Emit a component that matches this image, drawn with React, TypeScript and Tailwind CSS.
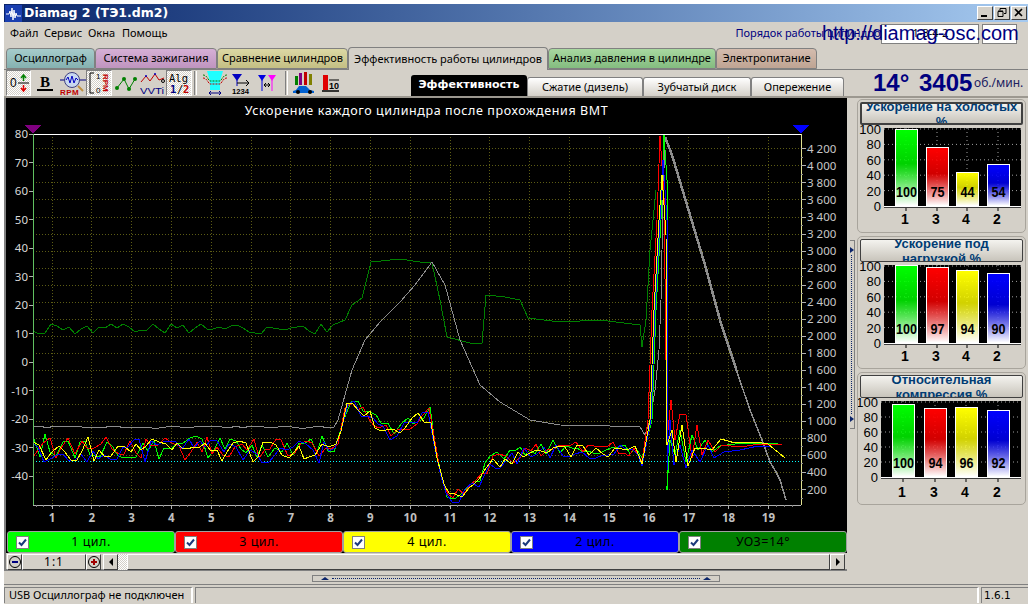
import React from "react";

const FONT = "font-['Noto_Sans',sans-serif]";
const NAVY = "#00007f";

// --- chart data, in page pixels ---
let seed = 12345;
const rnd = () => {
  seed = (seed * 16807) % 2147483647;
  return seed / 2147483647;
};

const lerp = (pts: number[][], x: number) => {
  for (let i = 1; i < pts.length; i++) {
    if (x <= pts[i][0]) {
      const [x0, y0] = pts[i - 1];
      const [x1, y1] = pts[i];
      return y0 + ((y1 - y0) * (x - x0)) / (x1 - x0);
    }
  }
  return pts[pts.length - 1][1];
};

const envelope = [
  [33, 448], [335, 450], [340, 430], [350, 398], [367, 413], [383, 430], [393, 433], [413, 421],
  [430, 412], [437, 453], [447, 497], [465, 492], [480, 478], [490, 462], [510, 458], [540, 449], [640, 450],
];
const ampAt = (x: number) => (x < 335 ? 24 : x < 440 ? 13 : 15);

const cylinder = (dx: number, bias: number, top: number, low: number, tail: number[][]) => {
  const pts: number[][] = [];
  for (let x = 33; x < 640; x += 5 + Math.floor(rnd() * 3)) {
    pts.push([x, lerp(envelope, x) + bias + (rnd() - 0.5) * ampAt(x)]);
  }
  pts.push([642, 462 + bias * 2], [648 + dx, 420], [652 + dx, 310], [657 + dx, 220], [660 + dx, top], [664 + dx, top + 60], [667, low]);
  return [...pts, ...tail];
};

const toPoints = (pts: number[][]) => pts.map((p) => `${p[0]},${Math.round(p[1])}`).join(" ");

const greenCyl = cylinder(4, -2, 135, 490, [[670, 440], [675, 455], [680, 430], [686, 462], [692, 435], [698, 450], [705, 440], [712, 452], [720, 446], [735, 444], [755, 443], [778, 444]]);
const redCyl = cylinder(0, 0, 136, 440, [[671, 400], [675, 440], [680, 414], [686, 415], [692, 458], [697, 425], [702, 455], [708, 440], [715, 452], [722, 445], [740, 447], [760, 444], [782, 445]]);
const blueCyl = cylinder(3, 2, 160, 470, [[670, 420], [674, 465], [680, 445], [686, 468], [692, 450], [700, 462], [708, 445], [714, 458], [724, 452], [740, 450], [758, 446], [772, 446]]);
const yellowCyl = cylinder(2, 1, 175, 445, [[672, 430], [676, 462], [682, 425], [688, 466], [695, 448], [702, 448], [712, 450], [721, 439], [735, 443], [755, 442], [768, 444], [785, 458]]);

const advance: number[][] = [];
for (let x = 33; x < 338; x += 6) advance.push([x, 329 + (rnd() - 0.5) * 11]);
advance.push(
  [345, 320], [352, 305], [362, 298], [371, 262], [400, 259], [420, 262], [432, 263], [440, 300], [447, 337], [470, 343],
  [482, 343], [486, 295], [505, 297], [520, 300], [528, 318], [560, 322], [600, 320], [640, 325], [642, 347], [646, 320], [650, 250], [656, 190],
);

const rpmFlat: number[][] = [];
for (let x = 33; x < 336; x += 7) rpmFlat.push([x, 427 + (rnd() - 0.5) * 3]);
const rpmCurve = [
  ...rpmFlat,
  [338, 420], [345, 395], [352, 370], [365, 340], [380, 322], [400, 302], [415, 285], [432, 262], [445, 285], [460, 340], [480, 385],
  [500, 402], [530, 420], [560, 425], [610, 426], [640, 427], [645, 435], [650, 420], [655, 390], [659, 350], [661, 300], [663, 200], [665, 137],
];
const rpmFall = [[665, 137], [672, 155], [690, 215], [705, 265], [720, 320], [737, 372]];
const rpmTail = [[737, 372], [750, 410], [762, 440], [770, 462], [776, 472], [780, 480], [786, 500]];

const rightTicks = Array.from({ length: 21 }, (_, i) => 200 + i * 200);
const rightY = (v: number) => 489.5 - ((v - 200) / 200) * 17.03;
const leftTicks = [80, 70, 60, 50, 40, 30, 20, 10, 0, -10, -20, -30, -40];
const leftY = (v: number) => 134 + ((80 - v) / 10) * 28.5;
const xTicks = Array.from({ length: 19 }, (_, i) => i + 1);
const tickX = (n: number) => 52 + (n - 1) * 39.8;
const minorX = Array.from({ length: 96 }, (_, i) => 36 + i * 7.96);

function MainChart() {
  return (
    <svg viewBox="6 125 841 403" className="block w-[841px] h-[403px]" fontFamily="'Noto Sans', sans-serif" shapeRendering="crispEdges">
      {rightTicks.map((v) => (
        <line key={v} x1="33" x2="801" y1={rightY(v)} y2={rightY(v)} stroke="#5c5c14" strokeDasharray="1 2" />
      ))}
      {xTicks.map((n) => (
        <line key={n} x1={tickX(n)} x2={tickX(n)} y1="134" y2="505" stroke="#5c5c14" strokeDasharray="1 2" />
      ))}
      <line x1="33" x2="801" y1="461" y2="461" stroke="#00ffff" strokeDasharray="1 2" />

      <polyline points={toPoints(advance)} fill="none" stroke="#008000" />
      <polyline points={toPoints(rpmCurve)} fill="none" stroke="#8c8c8c" />
      <polyline points={toPoints(rpmFall)} fill="none" stroke="#8c8c8c" strokeWidth="2.5" />
      <polyline points={toPoints(rpmTail)} fill="none" stroke="#8c8c8c" strokeWidth="1.5" />
      <polyline points={toPoints(greenCyl)} fill="none" stroke="#00ff00" />
      <polyline points={toPoints(redCyl)} fill="none" stroke="#ff0000" />
      <polyline points={toPoints(blueCyl)} fill="none" stroke="#0000ff" />
      <polyline points={toPoints(yellowCyl)} fill="none" stroke="#ffff00" />

      <line x1="33" x2="801" y1="134" y2="134" stroke="#ffffff" />
      <line x1="33" x2="33" y1="134" y2="505" stroke="#60c060" />
      <line x1="801" x2="801" y1="134" y2="505" stroke="#e0e090" />
      <line x1="33" x2="801" y1="505" y2="505" stroke="#b0b0b0" />

      <polygon points="25,125 41,125 33,134" fill="#800080" />
      <polygon points="793,125 809,125 801,134" fill="#0000ff" />

      {leftTicks.map((v) => (
        <g key={v}>
          <line x1="29" x2="33" y1={leftY(v)} y2={leftY(v)} stroke="#b0b0b0" />
          <text x="28" y={leftY(v) + 4} textAnchor="end" fontSize="11.5" fill="#d8d8d8" shapeRendering="auto">
            {v}
          </text>
        </g>
      ))}
      {rightTicks.map((v) => (
        <g key={v}>
          <line x1="801" x2="806" y1={rightY(v)} y2={rightY(v)} stroke="#b0b0b0" />
          <line x1="801" x2="803" y1={rightY(v) + 8.5} y2={rightY(v) + 8.5} stroke="#909090" />
          <text x="807" y={rightY(v) + 4} fontSize="11.5" fill="#c8c8c8">
            {v >= 1000 ? `${Math.floor(v / 1000)} ${String(v % 1000).padStart(3, "0")}` : v}
          </text>
        </g>
      ))}
      {minorX.map((x) => (
        <line key={x} x1={x} x2={x} y1="505" y2="507" stroke="#808080" />
      ))}
      {xTicks.map((n) => (
        <g key={n}>
          <line x1={tickX(n)} x2={tickX(n)} y1="505" y2="509" stroke="#b0b0b0" />
          <text x={tickX(n)} y="522" textAnchor="middle" fontSize="11.5" fontWeight="700" fill="#c0c0c0">
            {n}
          </text>
        </g>
      ))}
    </svg>
  );
}

// --- right hand bar charts ---
type Bar = { label: string; value: number; color: string; x: number; top: number };

function BarChart({ id, left, top, bottom, labelY, bars }: { id: string; left: number; top: number; bottom: number; labelY: number; bars: Bar[] }) {
  const ticks = [100, 80, 60, 40, 20, 0];
  const tickY = (v: number) => bottom - ((bottom - top - 1) * v) / 100;
  return (
    <svg viewBox={`858 ${top - 3} 167 ${labelY - top + 11}`} className="block" style={{ width: 167, height: labelY - top + 11 }} fontFamily="'Liberation Sans', sans-serif">
      <defs>
        {bars.map((b) => (
          <linearGradient key={b.label} id={`${id}${b.label}`} x1="0" y1="0" x2="0" y2="1">
            <stop offset="0" stopColor={b.color} />
            <stop offset="0.45" stopColor={b.color} stopOpacity="0.82" />
            <stop offset="1" stopColor="#ffffff" />
          </linearGradient>
        ))}
      </defs>
      <rect x={left} y={top} width={1021 - left} height={bottom - top} fill="#000000" />
      {ticks.slice(0, 5).map((v) => (
        <line key={v} x1={left} x2="1021" y1={tickY(v)} y2={tickY(v)} stroke="#a0a0a0" strokeDasharray="1 3" />
      ))}
      {bars.map((b) => (
        <line key={b.label} x1={b.x + 11} x2={b.x + 11} y1={top} y2={bottom} stroke="#a0a0a0" strokeDasharray="1 3" />
      ))}
      {ticks.map((v) => (
        <text key={v} x={left - 3} y={tickY(v) + 5} textAnchor="end" fontSize="13" fill="#000000">
          {v}
        </text>
      ))}
      {bars.map((b) => (
        <g key={b.label}>
          <rect x={b.x + 0.5} y={b.top + 0.5} width="22" height={bottom - b.top - 1} fill={`url(#${id}${b.label})`} stroke="#ffffff" />
          <text x={b.x + 11.5} y={bottom - 9} textAnchor="middle" fontSize="15" fontWeight="700" fill="#000000" textLength={b.value === 100 ? 21 : 14} lengthAdjust="spacingAndGlyphs">
            {b.value}
          </text>
          <line x1={b.x + 11} x2={b.x + 11} y1={bottom} y2={bottom + 5} stroke="#000000" />
          <text x={b.x + 10} y={labelY + 5} textAnchor="middle" fontSize="14" fontWeight="700" fill="#000000">
            {b.label}
          </text>
        </g>
      ))}
      <line x1={left} x2="1021" y1={bottom + 0.5} y2={bottom + 0.5} stroke="#ffffff" />
      <line x1={left} x2="1021" y1={bottom + 1.5} y2={bottom + 1.5} stroke="#404040" />
    </svg>
  );
}

function MetricPanel({ title, active, h, children }: { title: string; active?: boolean; h: string; children: React.ReactNode }) {
  return (
    <div className={`${h} border border-[#a8a49c] rounded-[5px] flex flex-col items-center pt-[2px] overflow-hidden`}>
      <div
        className={`w-[163px] h-[23px] shrink-0 rounded-[2px] border border-[#404040] flex items-center justify-center text-center leading-[15px] font-['Liberation_Sans',sans-serif] font-bold text-[13px] text-[#003c74] bg-gradient-to-b from-[#f4f3ef] to-[#c8c4bb] overflow-hidden ${active ? "border-2 border-[#003c74]" : ""}`}
      >
        <span>{title}</span>
      </div>
      {children}
    </div>
  );
}

// --- toolbar icons ---
const Dither = "bg-[repeating-conic-gradient(#ffffff_0_25%,#d4d0c8_0_50%)] bg-[length:2px_2px]";

function ToolBtn({ w, pressed, children }: { w: string; pressed?: boolean; children: React.ReactNode }) {
  return (
    <div className={`${w} h-[26px] shrink-0 flex items-center justify-center ${pressed ? `${Dither} border-t border-l border-[#808080] border-r border-r-white border-b border-b-white` : ""}`}>
      {children}
    </div>
  );
}

const iconFont = "'Liberation Sans', sans-serif";

const toolIcons = {
  zero: (
    <svg width="22" height="22" viewBox="0 0 22 22" fontFamily={iconFont}>
      <text x="2" y="15" fontSize="12" fill="#000">0</text>
      <line x1="10" x2="21" y1="11" y2="11" stroke="#000" />
      <path d="M15.5 9V4M13 6l2.5-3L18 6" fill="none" stroke="#008000" strokeWidth="1.5" />
      <path d="M15.5 13v5M13 16l2.5 3 2.5-3" fill="none" stroke="#e00000" strokeWidth="1.5" />
    </svg>
  ),
  bold: (
    <svg width="20" height="20" viewBox="0 0 20 20" fontFamily="'Liberation Serif', serif">
      <text x="10" y="14" textAnchor="middle" fontSize="15" fontWeight="700" fill="#000">B</text>
      <rect x="2" y="16" width="16" height="2" fill="#000" />
    </svg>
  ),
  rpm: (
    <svg width="26" height="26" viewBox="0 0 26 26" fontFamily={iconFont}>
      <line x1="0" x2="26" y1="10" y2="10" stroke="#000080" />
      <circle cx="12" cy="10" r="7.5" fill="#c8d8f0" stroke="#404080" />
      <path d="M6 10l2-3 2 6 2-7 2 7 2-5 2 2" fill="none" stroke="#0000c0" />
      <path d="M18 16l5 5" stroke="#c09040" strokeWidth="2" />
      <text x="0" y="25" fontSize="8" fontWeight="700" fill="#c00000" letterSpacing="0.5">RPM</text>
    </svg>
  ),
  rpmAxis: (
    <svg width="24" height="24" viewBox="0 0 24 24" fontFamily={iconFont}>
      <path d="M7 2H3v20h4" fill="none" stroke="#000" />
      <text x="9" y="8" fontSize="8" fill="#000">1</text>
      <text x="9" y="22" fontSize="8" fill="#000">0</text>
      <text transform="translate(16 3) rotate(90)" fontSize="8" fontWeight="700" fill="#c00000">RPM</text>
    </svg>
  ),
  dots: (
    <svg width="24" height="22" viewBox="0 0 24 22">
      <path d="M3 16L10 7l5 10 6-10" fill="none" stroke="#008000" />
      <g fill="#008000">
        <circle cx="3" cy="16" r="2" /><circle cx="10" cy="7" r="2" /><circle cx="15" cy="17" r="2" /><circle cx="21" cy="7" r="2" />
      </g>
    </svg>
  ),
  vvti: (
    <svg width="26" height="24" viewBox="0 0 26 24" fontFamily={iconFont}>
      <path d="M1 11l5-6 4 5 5-7 4 6 5-2" fill="none" stroke="#c00000" />
      <g fill="#0000c0"><circle cx="6" cy="5" r="1" /><circle cx="15" cy="3" r="1" /></g>
      <circle cx="23" cy="10" r="1.5" fill="none" stroke="#000" />
      <text x="0" y="23" fontSize="9.5" fill="#000080" textLength="24" lengthAdjust="spacingAndGlyphs">VVTi</text>
    </svg>
  ),
  alg: (
    <svg width="22" height="24" viewBox="0 0 22 24" fontFamily="'DejaVu Sans Mono', monospace">
      <text x="1" y="11" fontSize="10.5" fill="#000">Alg</text>
      <text x="2" y="22" fontSize="10.5" fontWeight="700" fill="#000080">1</text>
      <text x="9" y="22" fontSize="10.5" fill="#000">/</text>
      <text x="15" y="22" fontSize="10.5" fontWeight="700" fill="#c00000">2</text>
    </svg>
  ),
  wave: (
    <svg width="24" height="26" viewBox="0 0 24 26">
      <path d="M4 1h16l-3 10v9H7v-9z" fill="#20ffff" />
      <path d="M0 8c4 0 5 5 7 6h10c2-1 3-6 7-6" fill="none" stroke="#c00000" strokeDasharray="2 1" />
      <path d="M0 5c4 0 5 5 7 6h10c2-1 3-6 7-6" fill="none" stroke="#008000" strokeDasharray="2 1" />
      <path d="M6 23h12M6 23l2-2M6 23l2 2M18 23l-2-2M18 23l-2 2" stroke="#000080" fill="none" />
    </svg>
  ),
  order: (
    <svg width="20" height="22" viewBox="0 0 20 22" fontFamily={iconFont}>
      <polygon points="1,2 11,2 6,9" fill="#0000c0" />
      <line x1="6" x2="6" y1="8" y2="14" stroke="#0000c0" />
      <path d="M6 11h12M15 8l3 3-3 3" fill="none" stroke="#000" />
      <text x="1" y="22" fontSize="7.5" fontWeight="700" fill="#000" textLength="17" lengthAdjust="spacingAndGlyphs">1234</text>
    </svg>
  ),
  span: (
    <svg width="18" height="20" viewBox="0 0 18 20">
      <polygon points="0,2 8,2 4,8" fill="#0000e0" />
      <line x1="4" x2="4" y1="7" y2="18" stroke="#0000e0" />
      <polygon points="10,2 18,2 14,8" fill="#ff00ff" />
      <line x1="14" x2="14" y1="7" y2="18" stroke="#ff00ff" />
      <path d="M6 12h6M6 12l2-2M6 12l2 2M12 12l-2-2M12 12l-2 2" stroke="#000" fill="none" />
    </svg>
  ),
  car: (
    <svg width="24" height="24" viewBox="0 0 24 24">
      <rect x="3" y="5" width="3" height="9" fill="#008000" />
      <rect x="7" y="2" width="3" height="12" fill="#800080" />
      <rect x="12" y="1" width="3" height="13" fill="#c00000" />
      <rect x="17" y="3" width="3" height="11" fill="#808000" />
      <path d="M1 20l3-1 3-4h7l4 4 4 1v2H1z" fill="#0060d0" />
      <circle cx="6" cy="21" r="2" fill="#000" /><circle cx="18" cy="21" r="2" fill="#000" />
    </svg>
  ),
  bar10: (
    <svg width="17" height="22" viewBox="0 0 17 22" fontFamily={iconFont}>
      <rect x="1" y="3" width="5" height="15" fill="#e00000" />
      <line x1="0" x2="17" y1="19" y2="19" stroke="#000" strokeWidth="1.5" />
      <text x="7" y="17" fontSize="9" fontWeight="700" fill="#000">10</text>
      <line x1="7" x2="17" y1="8" y2="8" stroke="#000" />
    </svg>
  ),
};

const topTabs = [
  { label: "Осциллограф", w: "w-[89px]", cls: "bg-gradient-to-b from-[#a6cccc] to-[#85b1b0]" },
  { label: "Система зажигания", w: "w-[122px]", cls: "bg-gradient-to-b from-[#d6b0d6] to-[#bf94bf]" },
  { label: "Сравнение цилиндров", w: "w-[131px]", cls: "bg-gradient-to-b from-[#dcd8a4] to-[#c4bf84]" },
  { label: "Эффективность работы цилиндров", w: "w-[200px]", active: true, cls: "bg-[#d4d0c8]" },
  { label: "Анализ давления в цилиндре", w: "w-[168px]", cls: "bg-gradient-to-b from-[#a8d8a0] to-[#84bc80]" },
  { label: "Электропитание", w: "w-[101px]", cls: "bg-gradient-to-b from-[#d4bcae] to-[#bfa493]" },
];

const subTabs = [
  { label: "Эффективность", w: "w-[116px]", active: true },
  { label: "Сжатие (дизель)", w: "w-[116px]" },
  { label: "Зубчатый диск", w: "w-[108px]" },
  { label: "Опережение", w: "w-[93px]" },
];

const legend = [
  { label: "1 цил.", cls: "bg-[#00ff00]" },
  { label: "3 цил.", cls: "bg-[#ff0000]" },
  { label: "4 цил.", cls: "bg-[#ffff00]" },
  { label: "2 цил.", cls: "bg-[#0000ff]" },
  { label: "УОЗ=14°", cls: "bg-[#008000]" },
];

const winBtn = "w-[16px] h-[14px] bg-[#d4d0c8] border border-t-white border-l-white border-r-[#404040] border-b-[#404040] flex items-center justify-center";
const raised = "bg-[#d4d0c8] border border-t-white border-l-white border-r-[#404040] border-b-[#404040]";

export default function App() {
  return (
    <div className={`w-[1032px] h-[608px] bg-white pt-[4px] pl-[4px] overflow-hidden ${FONT}`}>
      <div className="w-[1024px] h-[600px] bg-[#d4d0c8] flex flex-col text-[11px] text-black relative">
        {/* title bar */}
        <div className="h-[18px] shrink-0 flex items-center bg-gradient-to-r from-[#0a246a] to-[#a6caf0] pl-[1px] pr-[1px]">
          <svg width="17" height="17" viewBox="0 0 17 17" className="shrink-0">
            <rect width="17" height="17" fill="#1a3fb0" />
            <path d="M1 9h3l1-3 1 6 1-9 1 12 1-10 1 8 1-5 1 3h4" fill="none" stroke="#ffffff" />
          </svg>
          <span className="ml-[2px] font-['DejaVu_Sans',sans-serif] font-bold text-[12.5px] text-white leading-none">Diamag 2 (ТЭ1.dm2)</span>
          <div className="ml-auto flex items-center">
            <div className={winBtn}>
              <svg width="10" height="10" viewBox="0 0 10 10"><rect x="1" y="7" width="6" height="2" /></svg>
            </div>
            <div className={`${winBtn} ml-[1px]`}>
              <svg width="10" height="10" viewBox="0 0 10 10"><path d="M3 .5h6v5H7M3 .5v2M1 3.5h5v5H1zM1 3h5" fill="none" stroke="#000" /></svg>
            </div>
            <div className={`${winBtn} ml-[1px]`}>
              <svg width="10" height="10" viewBox="0 0 10 10"><path d="M1 1l7 7M8 1L1 8" stroke="#000" strokeWidth="1.6" /></svg>
            </div>
          </div>
        </div>

        {/* menu row */}
        <div className="h-[23px] shrink-0 flex items-center pl-[6px] relative">
          <span className="w-[34px]">Файл</span>
          <span className="w-[44px]">Сервис</span>
          <span className="w-[34px]">Окна</span>
          <span>Помощь</span>
          <span className="ml-[568px] w-[146px] whitespace-nowrap text-[#00007f]">Порядок работы цилиндров</span>
          <div className="w-[98px] h-[20px] bg-white border border-[#808080] flex items-center justify-center">1-3-4-2</div>
          <div className="ml-[3px] w-[35px] h-[20px] bg-white border border-[#808080]" />
          <span className="absolute left-[818px] top-[-1px] text-[20px] leading-[24px] font-['Liberation_Sans',sans-serif] text-[#00007f] whitespace-nowrap">http://diamag-osc.com</span>
        </div>

        {/* top tabs */}
        <div className="h-[24px] shrink-0 flex items-end pl-[2px]">
          {topTabs.map((t) => (
            <div
              key={t.label}
              className={`${t.w} ${t.cls} ${t.active ? "h-[23px] relative top-[1px] z-10" : "h-[21px]"} shrink-0 border border-[#808080] ${t.active ? "border-b-0" : ""} rounded-t-[4px] flex items-center justify-center whitespace-nowrap`}
            >
              {t.label}
            </div>
          ))}
        </div>

        {/* frame */}
        <div className="h-[503px] shrink-0 border-t border-[#808080] flex flex-col">
          {/* toolbar row */}
          <div className="h-[26px] shrink-0 flex">
            <div className="w-[407px] shrink-0 flex pl-[2px]">
              <ToolBtn w="w-[25px]" pressed>{toolIcons.zero}</ToolBtn>
              <ToolBtn w="w-[28px]">{toolIcons.bold}</ToolBtn>
              <ToolBtn w="w-[27px]">{toolIcons.rpm}</ToolBtn>
              <ToolBtn w="w-[26px]" pressed>{toolIcons.rpmAxis}</ToolBtn>
              <ToolBtn w="w-[27px]">{toolIcons.dots}</ToolBtn>
              <ToolBtn w="w-[27px]">{toolIcons.vvti}</ToolBtn>
              <ToolBtn w="w-[26px]" pressed>{toolIcons.alg}</ToolBtn>
              <div className="w-[3px] ml-[2px] h-[24px] self-center border-l border-[#808080] border-r border-r-white" />
              <div className="w-[5px]" />
              <ToolBtn w="w-[26px]">{toolIcons.wave}</ToolBtn>
              <div className="w-[2px]" />
              <ToolBtn w="w-[22px]">{toolIcons.order}</ToolBtn>
              <div className="w-[5px]" />
              <ToolBtn w="w-[20px]">{toolIcons.span}</ToolBtn>
              <div className="w-[8px]" />
              <div className="w-[3px] h-[24px] self-center border-l border-[#808080] border-r border-r-white" />
              <div className="w-[3px]" />
              <ToolBtn w="w-[26px]">{toolIcons.car}</ToolBtn>
              <div className="w-[3px]" />
              <ToolBtn w="w-[20px]">{toolIcons.bar10}</ToolBtn>
            </div>
            <div className="w-[434px] shrink-0 flex items-end">
              {subTabs.map((t) =>
                t.active ? (
                  <div key={t.label} className={`${t.w} h-[21px] shrink-0 bg-black rounded-t-[3px] text-white font-['DejaVu_Sans',sans-serif] font-bold text-[11px] flex items-center justify-center`}>
                    {t.label}
                  </div>
                ) : (
                  <div key={t.label} className={`${t.w} h-[19px] shrink-0 bg-gradient-to-b from-white to-[#d4d0c8] border border-b-0 border-[#808080] rounded-t-[3px] flex items-center justify-center`}>
                    {t.label}
                  </div>
                ),
              )}
            </div>
            <div className="flex-1 flex items-center pl-[28px] text-[#00007f] whitespace-nowrap">
              <span className="font-['Liberation_Sans',sans-serif] font-bold text-[24px] leading-none w-[46px]">14°</span>
              <span className="font-['Liberation_Sans',sans-serif] font-bold text-[24px] leading-none w-[55px]">3405</span>
              <span className="text-[12px] text-[#202060]">об./мин.</span>
            </div>
          </div>

          {/* body */}
          <div className="h-[474px] shrink-0 flex border-t-2 border-[#9c9890]">
            <div className="w-[843px] shrink-0 h-[473px] border-l-2 border-r-0 border-b-2 border-[#808080] flex flex-col">
              <div className="h-[455px] shrink-0 bg-black flex flex-col">
                <div className="h-[27px] shrink-0 flex items-center justify-center text-[12.5px] tracking-[0.6px] text-white">Ускорение каждого цилиндра после прохождения ВМТ</div>
                <MainChart />
                <div className="h-[3px] shrink-0" />
                <div className="h-[22px] shrink-0 flex pl-[1px]">
                  {legend.map((l) => (
                    <div key={l.label} className={`w-[168px] h-[22px] shrink-0 ${l.cls} border border-[#a0a0a0] rounded-[3px] relative flex items-center justify-center text-[12.5px] tracking-[0.5px] text-black`}>
                      <div className="absolute left-[8px] top-[4px] w-[13px] h-[13px] bg-white border border-[#808080] flex items-center justify-center">
                        <svg width="9" height="9" viewBox="0 0 9 9"><path d="M1 4.5l2.5 2.5L8 1.5" fill="none" stroke="#1c3a7c" strokeWidth="2" /></svg>
                      </div>
                      {l.label}
                    </div>
                  ))}
                </div>
                <div className="flex-1" />
              </div>

              {/* zoom + scrollbar */}
              <div className="h-[16px] shrink-0 mt-[1px] flex pl-[1px]">
                <div className={`${raised} w-[15px] shrink-0 flex items-center justify-center`}>
                  <svg width="12" height="12" viewBox="0 0 12 12"><circle cx="6" cy="6" r="5.5" fill="none" stroke="#000" /><path d="M3 6h6" stroke="#000080" strokeWidth="2" /></svg>
                </div>
                <div className={`${raised} w-[64px] shrink-0 flex items-center justify-center text-[12px] tracking-[1px]`}>1:1</div>
                <div className={`${raised} w-[15px] shrink-0 flex items-center justify-center`}>
                  <svg width="12" height="12" viewBox="0 0 12 12"><circle cx="6" cy="6" r="5.5" fill="none" stroke="#000" /><path d="M3 6h6M6 3v6" stroke="#a00000" strokeWidth="2" /></svg>
                </div>
                <div className={`${raised} ml-[2px] w-[15px] shrink-0 flex items-center justify-center`}>
                  <svg width="6" height="8" viewBox="0 0 6 8"><polygon points="5,0 1,4 5,8" /></svg>
                </div>
                <div className={`${Dither} w-[9px] shrink-0`} />
                <div className={`${raised} w-[703px] shrink-0`} />
                <div className={`${raised} w-[15px] shrink-0 flex items-center justify-center`}>
                  <svg width="6" height="8" viewBox="0 0 6 8"><polygon points="1,0 5,4 1,8" /></svg>
                </div>
              </div>
            </div>

            {/* vertical splitter */}
            <div className="w-[10px] shrink-0 pt-[142px] pl-[3px]">
              <div className="w-[5px] h-[189px] border border-l-0 border-[#808080] border-r-[#808080] flex flex-col items-start justify-between py-[6px] relative">
                <div className="w-0 h-0 border-y-[3px] border-y-transparent border-l-[4px] border-l-[#0a246a]" />
                <div className="absolute left-[1px] top-[14px] bottom-[14px] border-l border-dotted border-[#0a246a]" />
                <div className="w-0 h-0 border-y-[3px] border-y-transparent border-l-[4px] border-l-[#0a246a]" />
              </div>
            </div>

            {/* right panels */}
            <div className="w-[169px] shrink-0 pt-[1px] flex flex-col gap-[3px]">
              <MetricPanel title="Ускорение на холостых %" active h="h-[134px]">
                <BarChart
                  id="idle"
                  left={884}
                  top={131}
                  bottom={209}
                  labelY={222}
                  bars={[
                    { label: "1", value: 100, color: "#00ff00", x: 895, top: 132 },
                    { label: "3", value: 75, color: "#ff0000", x: 926, top: 150 },
                    { label: "4", value: 44, color: "#ffff00", x: 956, top: 175 },
                    { label: "2", value: 54, color: "#0000ff", x: 987, top: 167 },
                  ]}
                />
              </MetricPanel>
              <MetricPanel title="Ускорение под нагрузкой %" h="h-[133px]">
                <BarChart
                  id="load"
                  left={884}
                  top={267}
                  bottom={345}
                  labelY={358}
                  bars={[
                    { label: "1", value: 100, color: "#00ff00", x: 895, top: 267 },
                    { label: "3", value: 97, color: "#ff0000", x: 926, top: 269 },
                    { label: "4", value: 94, color: "#ffff00", x: 956, top: 272 },
                    { label: "2", value: 90, color: "#0000ff", x: 987, top: 275 },
                  ]}
                />
              </MetricPanel>
              <MetricPanel title="Относительная компрессия %" h="h-[133px]">
                <BarChart
                  id="comp"
                  left={881}
                  top={403}
                  bottom={479}
                  labelY={494}
                  bars={[
                    { label: "1", value: 100, color: "#00ff00", x: 892, top: 406 },
                    { label: "3", value: 94, color: "#ff0000", x: 924, top: 410 },
                    { label: "4", value: 96, color: "#ffff00", x: 955, top: 409 },
                    { label: "2", value: 92, color: "#0000ff", x: 987, top: 412 },
                  ]}
                />
              </MetricPanel>
            </div>
          </div>
        </div>

        {/* horizontal splitter */}
        <div className="flex-1 flex flex-col">
          <div className="h-[12px] shrink-0 pl-[308px] pt-[3px]">
            <div className="w-[408px] h-[7px] border border-[#808080] relative flex items-center justify-between px-[8px]">
              <div className="w-0 h-0 border-x-[4px] border-x-transparent border-b-[3px] border-b-[#0a246a]" />
              <div className="flex-1 mx-[3px] border-t border-dotted border-[#0a246a]" />
              <div className="w-0 h-0 border-x-[4px] border-x-transparent border-b-[3px] border-b-[#0a246a]" />
            </div>
          </div>
        </div>
        <div className="absolute left-0 right-0 top-[580px] border-t border-[#808080]" />
        <div className="absolute left-0 right-0 top-[583px] h-[16px] flex">
          <div className="w-[189px] border-l border-t border-[#808080] border-r-2 border-r-white pl-[4px] flex items-center">USB Осциллограф не подключен</div>
          <div className="w-[784px] ml-[2px] border-l border-t border-[#808080] border-r-2 border-r-white" />
          <div className="w-[47px] ml-[2px] border-l border-t border-[#808080] pl-[2px] flex items-center font-['DejaVu_Sans',sans-serif] text-[10.5px]">1.6.1</div>
        </div>
      </div>
    </div>
  );
}
